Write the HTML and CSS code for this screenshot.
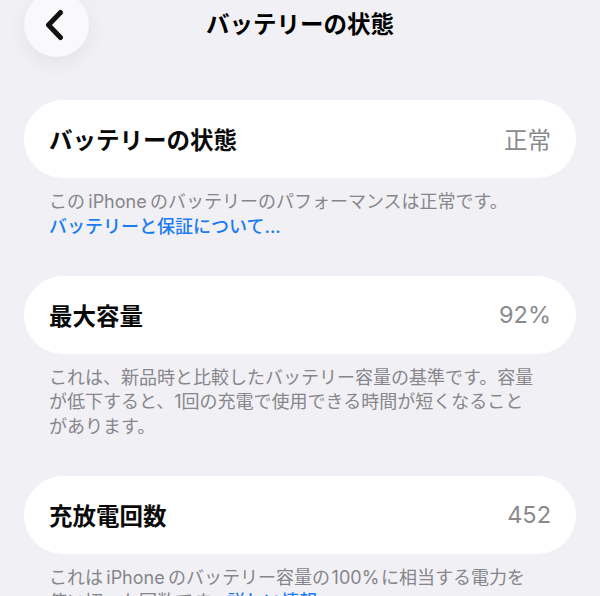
FILE: index.html
```html
<!DOCTYPE html>
<html lang="ja">
<head>
<meta charset="utf-8">
<title>バッテリーの状態</title>
<link rel="stylesheet" href="styles.css">
</head>
<body>
<div class="screen">
  <header class="nav">
    <button class="back" aria-label="戻る">
      <svg class="chev" viewBox="0 0 20 32" width="20" height="32">
        <path d="M15.5 3.5 L3.5 16 L15.5 28.5" fill="none" stroke="#111" stroke-width="5" stroke-linecap="round" stroke-linejoin="round"/>
      </svg>
    </button>
    <h1 class="title">バッテリーの状態</h1>
    <div class="spacer"></div>
  </header>

  <main class="content">
    <section class="group">
      <div class="card">
        <span class="label">バッテリーの状態</span>
        <span class="value">正常</span>
      </div>
      <p class="desc">この&#8201;iPhone&#8201;のバッテリーのパフォーマンスは正常です。<br><span class="link">バッテリーと保証について...</span></p>
    </section>

    <section class="group">
      <div class="card">
        <span class="label">最大容量</span>
        <span class="value">92%</span>
      </div>
      <p class="desc">これは、新品時と比較したバッテリー容量の基準です。容量<br>が低下すると、1回の充電で使用できる時間が短くなること<br>があります。</p>
    </section>

    <section class="group">
      <div class="card">
        <span class="label">充放電回数</span>
        <span class="value">452</span>
      </div>
      <p class="desc">これは&#8201;iPhone&#8201;のバッテリー容量の&#8202;100%&#8202;に相当する電力を<br>使い切った回数です。<span class="link">詳しい情報...</span></p>
    </section>
  </main>
</div>
</body>
</html>
```

FILE: styles.css
```css
html, body {
  margin: 0;
  padding: 0;
}

body {
  background: #f1f0f5;
  font-family: Inter, "Noto Sans CJK JP", sans-serif;
  color: #000;
  width: 600px;
  height: 596px;
  overflow: hidden;
}

.screen {
  display: flex;
  flex-direction: column;
}

.nav {
  display: grid;
  grid-template-columns: 1fr auto 1fr;
  align-items: center;
  height: 65px;
  margin-top: -8px;
  padding: 0 24px;
}

.back {
  width: 65px;
  height: 65px;
  border-radius: 50%;
  border: none;
  background: #f9f9fb;
  box-shadow: 0 6px 22px rgba(0, 0, 0, 0.06);
  display: flex;
  align-items: center;
  justify-content: center;
  padding: 0;
  justify-self: start;
}

.chev {
  display: block;
  margin-left: -4px;
  margin-top: 1px;
}

.title {
  margin: 0;
  font-size: 23.5px;
  font-weight: 700;
  line-height: 30px;
  text-align: center;
}

.content {
  display: flex;
  flex-direction: column;
  padding: 43px 24px 0;
}

.group {
  display: flex;
  flex-direction: column;
}

.card {
  background: #ffffff;
  height: 78px;
  border-radius: 39px;
  display: flex;
  align-items: center;
  justify-content: space-between;
  padding: 0 25px;
}

.label {
  font-size: 23.5px;
  font-weight: 700;
  color: #0a0a0a;
}

.value {
  font-size: 23.5px;
  font-weight: 400;
  color: #8a8a8e;
}

.desc {
  margin: 12px 0 36.5px;
  padding: 0 25px;
  font-size: 18px;
  line-height: 24.5px;
  color: #86868b;
  white-space: nowrap;
}

.link {
  color: #1a7cf0;
  font-weight: 500;
}
```
